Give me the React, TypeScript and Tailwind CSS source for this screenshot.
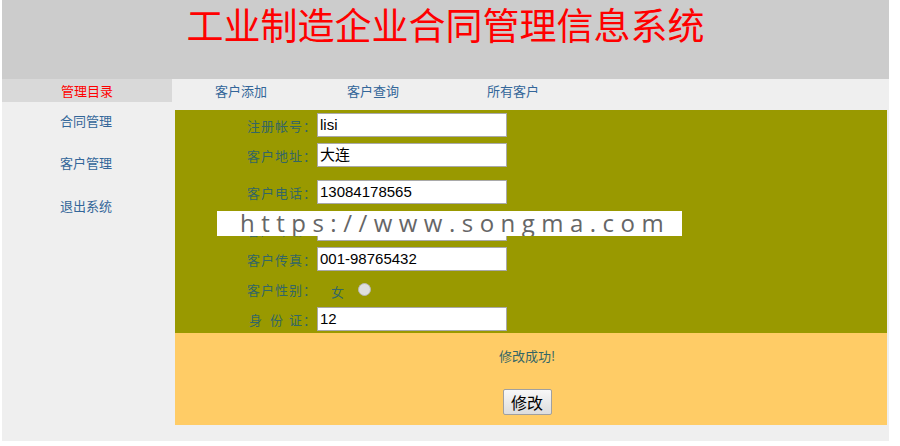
const cjk = { fontFamily: '"Noto Sans CJK SC", "Liberation Sans", sans-serif' };
const arial = { fontFamily: '"Liberation Sans", Arial, "Noto Sans CJK SC", sans-serif' };

function Field({ label, value, className = "" }: { label: React.ReactNode; value: string; className?: string }) {
  return (
    <div className={`flex items-center h-[24px] ${className}`}>
      <div className="w-[142px] text-right text-[13px] leading-none tracking-[1px] text-[#336666]">{label}</div>
      <div
        className="w-[190px] h-[24px] bg-white border border-[#a9a9a9] px-[2px] flex items-center text-[15px] text-black"
        style={arial}
      >
        {value}
      </div>
    </div>
  );
}

export default function App() {
  return (
    <div className="relative w-[900px] h-[446px] bg-white" style={cjk}>
      <div className="ml-[2px] w-[887px] h-[441px] bg-[#efefef] flex flex-col">
        {/* 标题 */}
        <header className="h-[79px] bg-[#cccccc] flex justify-center">
          <h1 className="pt-[4px] text-[37px] leading-[41px] font-normal text-[#ff0000]">
            工业制造企业合同管理信息系统
          </h1>
        </header>

        {/* 导航 */}
        <nav className="h-[23px] flex items-center text-[13px] text-[#336699]">
          <div className="w-[170px] h-full bg-[#d9d9d9] flex items-center justify-center text-[#ff0000]">
            管理目录
          </div>
          <a className="ml-[43px]">客户添加</a>
          <a className="ml-[80px]">客户查询</a>
          <a className="ml-[88px]">所有客户</a>
        </nav>

        <div className="flex flex-1">
          {/* 侧边栏 */}
          <aside className="w-[173px] flex flex-col pl-[58px] text-[13px] text-[#336699]">
            <a className="mt-[9px]">合同管理</a>
            <a className="mt-[22px]">客户管理</a>
            <a className="mt-[24px]">退出系统</a>
          </aside>

          {/* 表单 */}
          <main className="w-[712px] mt-[8px] flex flex-col">
            <section className="h-[223px] bg-[#999900] flex flex-col pt-[3px]">
              <Field label="注册帐号：" value="lisi" />
              <Field label="客户地址：" value="大连" className="mt-[6px]" />
              <Field label="客户电话：" value="13084178565" className="mt-[13px]" />
              <Field label="客户邮编：" value="116000" className="mt-[13px]" />
              <Field label="客户传真：" value="001-98765432" className="mt-[6px]" />
              <div className="h-[36px] flex items-center">
                <div className="w-[142px] text-right text-[13px] leading-none tracking-[1px] text-[#336666]">客户性别：</div>
                <span className="ml-[14px] text-[13px] leading-none text-[#336666] pt-[4px]">女</span>
                <span className="ml-[14px] w-[13px] h-[13px] rounded-full bg-[#dedede] border border-[#b8b8b8]" />
              </div>
              <Field
                label={
                  <>
                    <span className="mr-[7px]">身</span>
                    <span className="mr-[5px]">份</span>
                    <span>证：</span>
                  </>
                }
                value="12"
              />
            </section>

            <section className="h-[92px] bg-[#ffcc66] flex flex-col items-center pr-[8px]">
              <p className="mt-[15px] text-[13px] leading-[16px] text-[#336666]">修改成功!</p>
              <button className="mt-[25px] w-[49px] h-[26px] border border-[#a0a0a0] rounded-[2px] bg-gradient-to-b from-[#f8f8f8] to-[#dddddd] text-[16px] leading-none text-black">
                修改
              </button>
            </section>
          </main>
        </div>
      </div>

      {/* 水印 */}
      <div className="absolute left-[217px] top-[211px] w-[465px] h-[25px] bg-white flex items-center pl-[23px] overflow-hidden">
        <span className="text-[24px] leading-none tracking-[0.27em] text-[#666666] -mt-[2px]" style={{ fontFamily: '"Open Sans", "Noto Sans", sans-serif' }}>
          https://www.songma.com
        </span>
      </div>
    </div>
  );
}
